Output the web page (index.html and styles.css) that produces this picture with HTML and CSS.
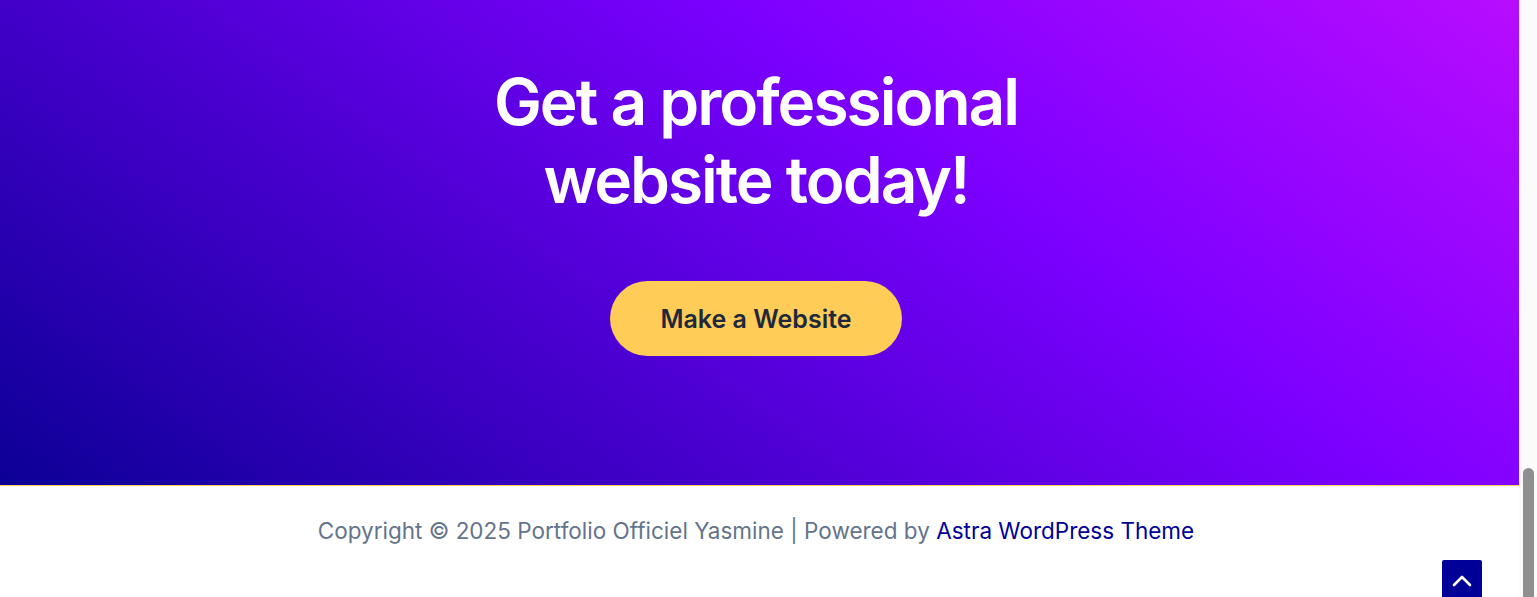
FILE: index.html
```html
<!DOCTYPE html>
<html lang="en">
<head>
<meta charset="utf-8">
<title>Get a professional website today!</title>
<link rel="stylesheet" href="styles.css">
</head>
<body>
<div class="page">
  <main class="main">
    <section class="cta">
      <div class="cta-inner">
        <h2 class="cta-title">Get a professional<br>website today!</h2>
        <a class="cta-button" href="#">Make a Website</a>
      </div>
    </section>
    <footer class="footer">
      <p class="copyright">Copyright © 2025 Portfolio Officiel Yasmine | Powered by <a href="#" class="footer-link">Astra WordPress Theme</a></p>
      <a href="#" class="to-top" aria-label="Scroll to top">
        <svg width="20" height="13" viewBox="0 0 20 13"><path d="M2 11 L10 3 L18 11" fill="none" stroke="#fff" stroke-width="2.6" stroke-linecap="round" stroke-linejoin="round"/></svg>
      </a>
    </footer>
  </main>
  <div class="scrollbar"><div class="thumb"></div></div>
</div>
</body>
</html>
```
FILE: styles.css
```css
* { box-sizing: border-box; }
html, body { margin: 0; padding: 0; height: 100%; overflow: hidden; }
body { font-family: Inter, "Liberation Sans", sans-serif; background: #fff; }
.page { display: flex; height: 597px; }
.main { flex: 1; display: flex; flex-direction: column; position: relative; }
.cta {
  height: 486px;
  border-bottom: 1px solid #ffcd57;
  background: linear-gradient(36deg, #0c0096 0%, #7c00ff 64%, #b80cff 100%);
  display: flex;
  justify-content: center;
  padding-right: 7px;
}
.cta-inner { display: flex; flex-direction: column; align-items: center; padding-top: 63px; }
.cta-title {
  margin: 0;
  color: #fff;
  font-family: Inter, sans-serif;
  font-weight: 600;
  font-size: 64px;
  line-height: 78px;
  letter-spacing: -2px;
  text-align: center;
}
.cta-button {
  margin-top: 62px;
  width: 292px;
  height: 75px;
  border-radius: 40px;
  background: #ffcd57;
  color: #1e293b;
  font-weight: 600;
  font-size: 25px;
  display: flex;
  align-items: center;
  justify-content: center;
  text-decoration: none;
}
.footer { flex: 1; display: flex; justify-content: center; padding-right: 7px; }
.copyright { margin: 31px 0 0; font-size: 22.5px; line-height: 28px; color: #64748b; white-space: nowrap; }
.footer-link { color: #000099; text-decoration: none; }
.to-top {
  position: absolute;
  right: 37px;
  bottom: -4px;
  width: 40px;
  height: 41px;
  background: #000099;
  border-radius: 2px;
  display: flex;
  align-items: center;
  justify-content: center;
}
.scrollbar { width: 18px; background: #fbfbfb; display: flex; flex-direction: column; justify-content: flex-end; padding: 0 3px 0 4px; }
.thumb { height: 129px; background: #8f8f8f; border-radius: 6px 6px 0 0; }
```
